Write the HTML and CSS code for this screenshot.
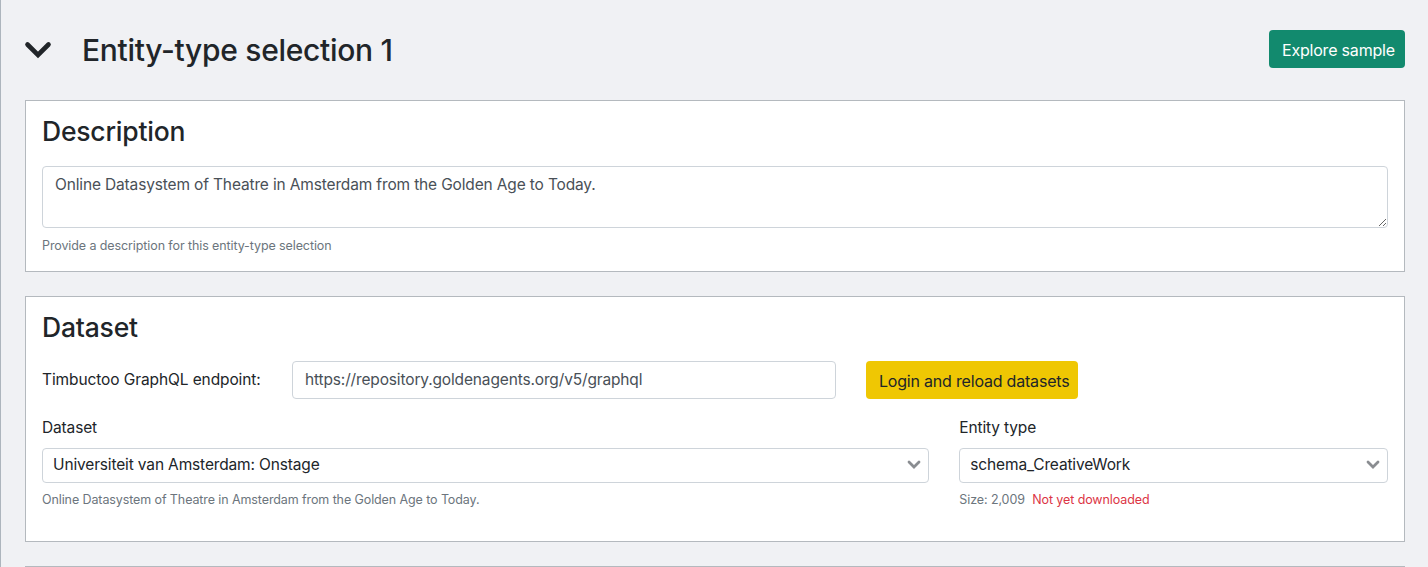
FILE: index.html
```html
<!DOCTYPE html>
<html lang="en">
<head>
<meta charset="utf-8">
<title>Entity-type selection 1</title>
<link rel="stylesheet" href="styles.css">
</head>
<body>
<div class="page">
  <div class="header">
    <div class="header-left">
      <svg class="toggle" width="28" height="20" viewBox="0 0 28 20" aria-hidden="true">
        <polyline points="3.5,4.5 14,15 24.5,4.5" fill="none" stroke="#212529" stroke-width="4.6" stroke-linecap="round" stroke-linejoin="miter"/>
      </svg>
      <h1 class="title">Entity-type selection 1</h1>
    </div>
    <button class="btn btn-green">Explore sample</button>
  </div>

  <div class="card">
    <h2 class="card-title">Description</h2>
    <textarea class="textarea" readonly>Online Datasystem of Theatre in Amsterdam from the Golden Age to Today.</textarea>
    <div class="help help-desc">Provide a description for this entity-type selection</div>
  </div>

  <div class="card card-dataset">
    <h2 class="card-title card-title-dataset">Dataset</h2>
    <div class="endpoint-row">
      <label class="endpoint-label">Timbuctoo GraphQL endpoint:</label>
      <div class="input">https://repository.goldenagents.org/v5/graphql</div>
      <button class="btn btn-yellow">Login and reload datasets</button>
    </div>
    <div class="select-grid">
      <div class="field">
        <div class="label">Dataset</div>
        <div class="select">
          <span>Universiteit van Amsterdam: Onstage</span>
          <svg class="caret" width="14" height="10" viewBox="0 0 14 10" aria-hidden="true"><polyline points="2,2 7,7 12,2" fill="none" stroke="#8a8d91" stroke-width="2.8" stroke-linecap="round"/></svg>
        </div>
        <div class="help">Online Datasystem of Theatre in Amsterdam from the Golden Age to Today.</div>
      </div>
      <div class="field">
        <div class="label">Entity type</div>
        <div class="select">
          <span>schema_CreativeWork</span>
          <svg class="caret" width="14" height="10" viewBox="0 0 14 10" aria-hidden="true"><polyline points="2,2 7,7 12,2" fill="none" stroke="#8a8d91" stroke-width="2.8" stroke-linecap="round"/></svg>
        </div>
        <div class="help">Size: 2,009 <span class="danger">Not yet downloaded</span></div>
      </div>
    </div>
  </div>

  <div class="card card-next"></div>
</div>
</body>
</html>
```
FILE: styles.css
```css
* { box-sizing: border-box; }
html, body { margin: 0; padding: 0; }
body {
  background: #f0f1f4;
  font-family: Inter, "Noto Sans", "Liberation Sans", sans-serif;
  color: #212529;
  font-size: 16px;
  line-height: 1.5;
  overflow: hidden;
}
.page {
  border-left: 1px solid #adb5bd;
  padding: 30px 23px 0 24px;
  min-height: 567px;
}
.header {
  display: flex;
  align-items: center;
  justify-content: space-between;
  height: 38px;
  margin-bottom: 32px;
}
.header-left {
  display: flex;
  align-items: center;
  padding-top: 2px;
}
.toggle {
  margin-left: -1px;
  margin-right: 30px;
}
.title {
  margin: 0;
  font-size: 30px;
  font-weight: 500;
  line-height: 1.2;
  letter-spacing: -0.3px;
}
.btn {
  font-family: inherit;
  font-size: 16px;
  line-height: 24px;
  padding: 7px 12px;
  border: 1px solid transparent;
  border-radius: 4px;
  height: 38px;
  white-space: nowrap;
}
.btn-green {
  background: #128a6e;
  color: #fff;
  width: 136px;
  letter-spacing: -0.2px;
}
.btn-yellow {
  background: #efc703;
  color: #212529;
  width: 212px;
  letter-spacing: -0.2px;
}
.card {
  background: #fff;
  border: 1px solid #b4b9be;
  padding: 15px 16px 16px;
  margin-bottom: 24px;
}
.card-title {
  margin: 0 0 18px;
  font-size: 26.5px;
  font-weight: 500;
  line-height: 1.2;
  letter-spacing: -0.2px;
}
.card-title-dataset { margin-bottom: 17px; }
.textarea {
  display: block;
  width: 100%;
  height: 62px;
  font-family: inherit;
  font-size: 15.5px;
  line-height: 24px;
  color: #495057;
  padding: 6px 12px;
  border: 1px solid #ced4da;
  border-radius: 4px;
  resize: vertical;
  outline: none;
  letter-spacing: -0.15px;
}
.help {
  margin-top: 7px;
  font-size: 12.5px;
  line-height: 19px;
  color: #6c757d;
  letter-spacing: -0.1px;
}
.help-desc { margin-top: 8px; }
.danger {
  color: #dc3545;
  margin-left: 4px;
}
.endpoint-row {
  display: flex;
  align-items: center;
  gap: 30px;
  margin-bottom: 17px;
}
.endpoint-label {
  width: 220px;
  font-size: 15.5px;
  letter-spacing: -0.1px;
}
.input {
  width: 544px;
  height: 38px;
  padding: 6px 12px;
  border: 1px solid #ced4da;
  border-radius: 4px;
  color: #495057;
  font-size: 15.5px;
  line-height: 24px;
  letter-spacing: -0.15px;
}
.select-grid {
  display: grid;
  grid-template-columns: calc((100% + 30px) * 8 / 12 - 30px) 1fr;
  gap: 30px;
  padding-bottom: 16px;
}
.label {
  font-size: 15.5px;
  line-height: 24px;
  margin-bottom: 8px;
  letter-spacing: -0.15px;
}
.select {
  display: flex;
  align-items: center;
  justify-content: space-between;
  height: 35px;
  padding: 0 7px 0 10px;
  border: 1px solid #ced4da;
  border-radius: 4px;
  font-size: 15.5px;
  letter-spacing: -0.15px;
  color: #212529;
}
.card-next { height: 120px; }
```
